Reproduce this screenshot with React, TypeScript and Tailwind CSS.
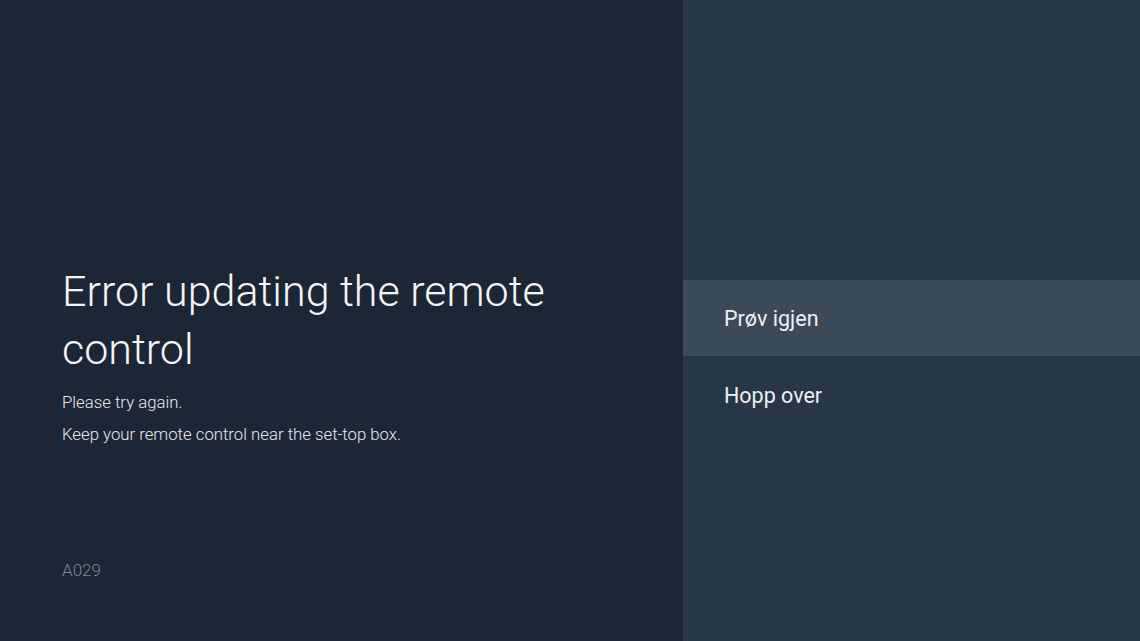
export default function App() {
  return (
    <div
      className="flex h-[641px] w-[1140px] overflow-hidden"
      style={{ fontFamily: "Roboto, 'Liberation Sans', sans-serif" }}
    >
      <div className="flex w-[683px] flex-col bg-[#1c2735] pl-[62px] pt-[262px]">
        <h1 className="w-[540px] text-[43px] font-light leading-[58px] text-[#f3f5f7]">
          Error updating the remote control
        </h1>
        <p className="mt-[8px] text-[16.75px] font-light leading-[32px] text-[#e6eaee]">Please try again.</p>
        <p className="text-[16.75px] font-light leading-[32px] text-[#e6eaee]">
          Keep your remote control near the set-top box.
        </p>
        <div className="mt-auto pb-[58px] text-[17px] font-light text-[#7d8895]">A029</div>
      </div>
      <div className="flex flex-1 flex-col bg-[#283745] pt-[280px]">
        <div className="flex h-[76px] items-center bg-[#3a4a56] pl-[41px] pt-[3px] text-[21.5px] text-[#eef1f3]">
          Prøv igjen
        </div>
        <div className="flex h-[78px] items-center pl-[41px] pt-[3px] text-[21.5px] text-[#eef1f3]">Hopp over</div>
      </div>
    </div>
  );
}
